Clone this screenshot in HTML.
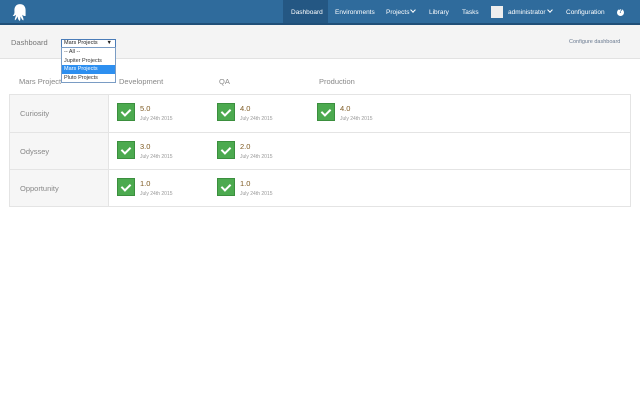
<!DOCTYPE html>
<html><head><style>
*{margin:0;padding:0;box-sizing:border-box}
body{width:640px;height:400px;background:#fff;font-family:"Liberation Sans",sans-serif;position:relative;overflow:hidden}
.hdr{position:absolute;left:0;top:0;width:640px;height:25px;background:#2f6b9c;border-bottom:2px solid #204f78}
.hdr span{position:absolute;top:9px;font-size:6.5px;color:#fff}
.act{position:absolute;left:283px;top:0;width:45px;height:23px;background:#245783}
.sub{position:absolute;left:0;top:25px;width:640px;height:34px;background:#f4f4f4;border-bottom:1px solid #e2e2e2}
.t{position:absolute;white-space:nowrap}
.tbl{position:absolute;left:9px;top:94px;width:622px;height:113px;border:1px solid #e4e4e4}
.lc{position:absolute;left:0;top:0;width:99px;height:111px;background:#f6f6f6;border-right:1px solid #e4e4e4}
.row{position:absolute;left:0;width:620px;border-top:1px solid #e4e4e4}
.ck{position:absolute;width:18px;height:18px;background:#4caa4f;border:1px solid #3b8f3e}
.ck:after{content:"";position:absolute;left:5px;top:3px;width:4px;height:7px;border-right:2.5px solid #fff;border-bottom:2.5px solid #fff;transform:rotate(45deg)}
.v{font-size:7.5px;color:#7e5a22}
.d{font-size:5px;color:#999}
.dd{position:absolute;left:61px;top:47px;width:55px;height:36px;background:#fff;border:1px solid #7a9cc4;font-size:5.5px;color:#333}
.dd div{height:8.5px;line-height:8.5px;padding-left:2px}
.chev{display:inline-block;width:4px;height:4px;border-right:1.5px solid #fff;border-bottom:1.5px solid #fff;transform:rotate(45deg);margin-left:2px;position:relative;top:-2px}
</style></head><body>
<div class="hdr">
<svg style="position:absolute;left:11px;top:3px" width="18" height="19" viewBox="0 0 16 17"><path d="M8 1C4.5 1 3 3.5 3 6.5c0 2 .5 3-1.5 5 1.5.5 2.5-.5 3-1-.3 2-1.5 3.5-1 5 1-.5 2-2.5 2.5-3.5 0 2 .5 3.5 2 4 .5-1 .2-2.5.5-4 .5 1.5 1.5 3.5 2.5 3.5.5-1.5-.7-3-1-5 .5.5 1.5 1.5 3 1C13 9.5 13 8.5 13 6.5 13 3.5 11.5 1 8 1z" fill="#fff"/></svg>
<div class="act"></div>
<span style="left:291px">Dashboard</span>
<span style="left:335px">Environments</span>
<span style="left:386px">Projects<i class="chev"></i></span>
<span style="left:429px">Library</span>
<span style="left:462px">Tasks</span>
<div style="position:absolute;left:491px;top:6px;width:12px;height:12px;background:#eee"></div>
<span style="left:508px">administrator<i class="chev"></i></span>
<span style="left:566px">Configuration</span>
<div style="position:absolute;left:617px;top:9px;width:7px;height:7px;border-radius:50%;background:#fff;color:#2f6b9c;font-size:6px;font-weight:bold;text-align:center;line-height:7px">?</div>
</div>
<div class="sub">
<div class="t" style="left:11px;top:13px;font-size:7.5px;color:#777">Dashboard</div>
<div class="t" style="left:569px;top:14px;font-size:5.5px;color:#6a7a90">Configure dashboard</div>
</div>
<div style="position:absolute;left:61px;top:39px;width:55px;height:9px;background:#fff;border:1px solid #4a7cb8;font-size:5.5px;line-height:7px;padding-left:2px;color:#222">Mars Projects<span style="position:absolute;right:3px">▼</span></div>
<div class="dd"><div>-- All --</div><div>Jupiter Projects</div><div style="background:#2d8ff0;color:#fff">Mars Projects</div><div>Pluto Projects</div></div>
<div class="t" style="left:19px;top:77px;font-size:7.5px;color:#888">Mars Project</div>
<div class="t" style="left:119px;top:77px;font-size:7.5px;color:#888">Development</div>
<div class="t" style="left:219px;top:77px;font-size:7.5px;color:#888">QA</div>
<div class="t" style="left:319px;top:77px;font-size:7.5px;color:#888">Production</div>
<div class="tbl">
<div class="lc"></div>
<div class="row" style="top:37px"></div>
<div class="row" style="top:74px"></div>
<div class="t" style="left:10px;top:14px;font-size:7.5px;color:#888">Curiosity</div>
<div class="t" style="left:10px;top:52px;font-size:7.5px;color:#888">Odyssey</div>
<div class="t" style="left:10px;top:89px;font-size:7.5px;color:#888">Opportunity</div>
</div>
<div class="ck" style="left:117px;top:103px"></div><div class="t v" style="left:140px;top:104px">5.0</div><div class="t d" style="left:140px;top:116px">July 24th 2015</div>
<div class="ck" style="left:217px;top:103px"></div><div class="t v" style="left:240px;top:104px">4.0</div><div class="t d" style="left:240px;top:116px">July 24th 2015</div>
<div class="ck" style="left:317px;top:103px"></div><div class="t v" style="left:340px;top:104px">4.0</div><div class="t d" style="left:340px;top:116px">July 24th 2015</div>
<div class="ck" style="left:117px;top:141px"></div><div class="t v" style="left:140px;top:142px">3.0</div><div class="t d" style="left:140px;top:154px">July 24th 2015</div>
<div class="ck" style="left:217px;top:141px"></div><div class="t v" style="left:240px;top:142px">2.0</div><div class="t d" style="left:240px;top:154px">July 24th 2015</div>
<div class="ck" style="left:117px;top:178px"></div><div class="t v" style="left:140px;top:179px">1.0</div><div class="t d" style="left:140px;top:191px">July 24th 2015</div>
<div class="ck" style="left:217px;top:178px"></div><div class="t v" style="left:240px;top:179px">1.0</div><div class="t d" style="left:240px;top:191px">July 24th 2015</div>
</body></html>
